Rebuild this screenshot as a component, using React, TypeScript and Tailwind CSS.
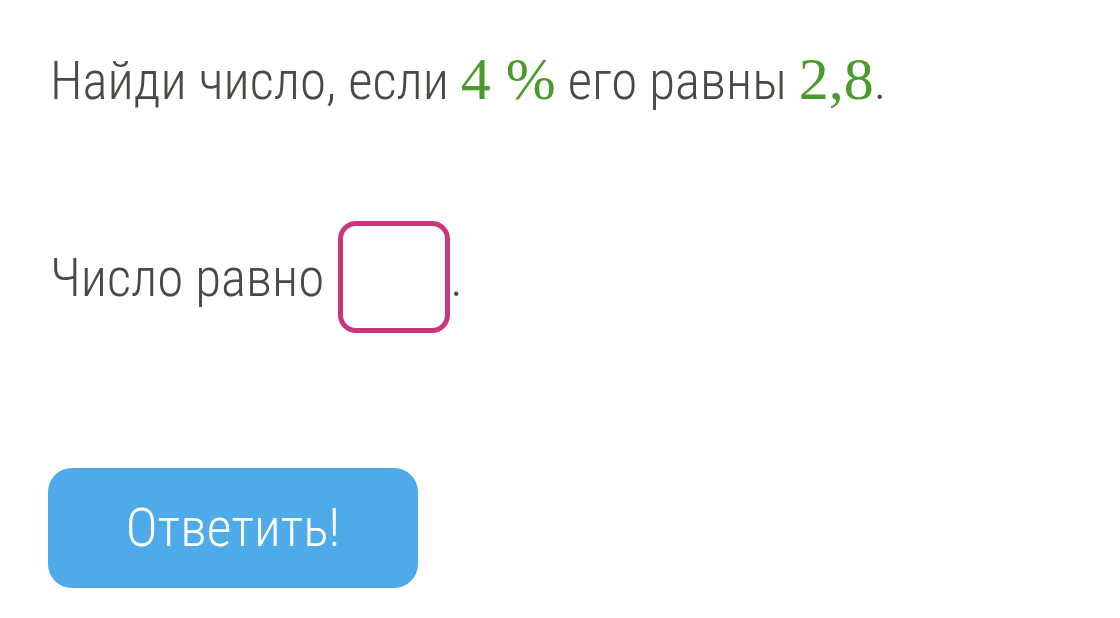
export default function App() {
  const sans = "font-['Roboto','Liberation_Sans',sans-serif] font-light font-stretch-condensed";
  return (
    <div className="w-[1120px] h-[618px] bg-white text-[#4a4a44] pl-[50px] overflow-hidden">
      <div className={`flex items-baseline h-[110px] pt-[53px] ${sans} text-[53px] leading-[53px] whitespace-pre`}>
        <span>Найди число, если </span>
        <span className="font-['Liberation_Serif',serif] font-normal text-[60px] text-[#4b9b2c] [font-stretch:normal]">4&nbsp;%</span>
        <span> его равны </span>
        <span className="font-['Liberation_Serif',serif] font-normal text-[60px] text-[#4b9b2c] [font-stretch:normal]">2,8</span>
        <span>.</span>
      </div>
      <div className={`flex items-start mt-[111px] ${sans} text-[53px] leading-[53px] whitespace-pre`}>
        <span className="mt-[31px]">Число равно </span>
        <div className="w-[112px] h-[112px] rounded-[18px] border-[5px] border-[#c8377c] ml-[2px]" />
        <span className="mt-[31px]">.</span>
      </div>
      <button className={`mt-[135px] -ml-[2px] w-[370px] h-[120px] rounded-[24px] bg-[#4eaae8] text-white ${sans} text-[54px] leading-[54px] flex items-center justify-center`}>
        Ответить!
      </button>
    </div>
  );
}
